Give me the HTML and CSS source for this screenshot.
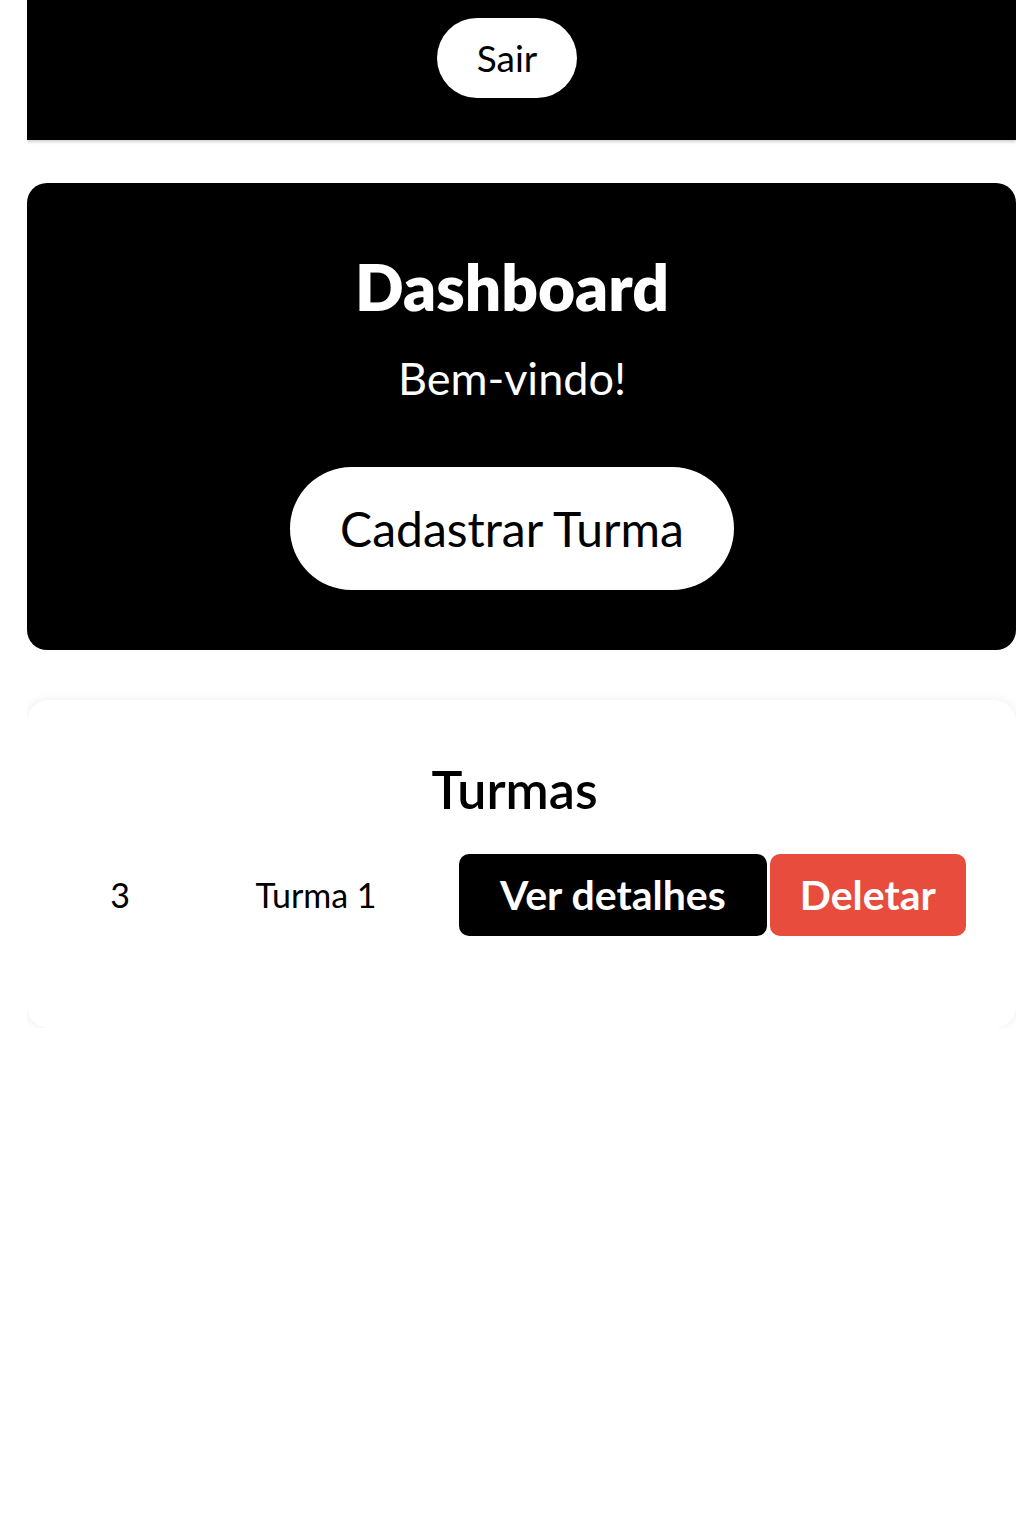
FILE: index.html
```html
<!DOCTYPE html>
<html lang="pt-BR">
<head>
<meta charset="utf-8">
<title>Dashboard</title>
<link rel="stylesheet" href="styles.css">
</head>
<body>
<header class="topbar">
  <button class="btn-sair">Sair</button>
</header>
<main class="content">
  <section class="hero">
    <h1 class="hero-title">Dashboard</h1>
    <p class="hero-sub">Bem-vindo!</p>
    <button class="btn-cadastrar">Cadastrar Turma</button>
  </section>
  <section class="panel">
    <h2 class="panel-title">Turmas</h2>
    <div class="row">
      <span class="cell">3</span>
      <span class="cell">Turma 1</span>
      <div class="actions">
        <button class="btn btn-dark">Ver detalhes</button>
        <button class="btn btn-red">Deletar</button>
      </div>
    </div>
  </section>
</main>
</body>
</html>
```
FILE: styles.css
```css
* { box-sizing: border-box; }
html, body { background: #fff; }
body {
  margin: 0 8px 0 27px;
  font-family: Lato, "Open Sans", sans-serif;
  color: #000;
}
button { font-family: inherit; border: none; cursor: pointer; }

.topbar {
  background: #000;
  height: 140px;
  padding: 18px 29px 0 0;
  display: flex;
  justify-content: center;
  align-items: flex-start;
  box-shadow: 0 2px 3px rgba(0,0,0,0.18);
}
.btn-sair {
  background: #fff;
  color: #000;
  font-size: 37px;
  line-height: 44px;
  padding: 18px 40px;
  border-radius: 40px;
}

.content {
  padding-top: 43px;
  display: flex;
  flex-direction: column;
  gap: 50px;
}

.hero {
  background: #000;
  color: #fff;
  border-radius: 20px;
  height: 467px;
  padding: 65px 19px 0 0;
  display: flex;
  flex-direction: column;
  align-items: center;
}
.hero-title {
  margin: 0;
  font-size: 64px;
  font-weight: 800;
  line-height: 77px;
}
.hero-sub {
  margin: 26px 0 0;
  font-size: 45px;
  line-height: 54px;
}
.btn-cadastrar {
  margin-top: 62px;
  background: #fff;
  color: #000;
  font-size: 48px;
  line-height: 57px;
  padding: 33px 50px;
  border-radius: 62px;
}

.panel {
  background: #fff;
  border-radius: 22px;
  height: 328px;
  padding: 59px 40px 0;
  box-shadow: 0 0 12px rgba(0,0,0,0.07);
}
.panel-title {
  margin: 0;
  text-align: center;
  font-size: 52px;
  font-weight: 600;
  line-height: 60px;
  padding-right: 14px;
}
.row {
  margin-top: 35px;
  display: grid;
  grid-template-columns: 106px 286px auto;
  align-items: center;
}
.cell {
  text-align: center;
  font-size: 34px;
  line-height: 40px;
}
.actions {
  display: flex;
  gap: 3px;
}
.btn {
  color: #fff;
  font-size: 41px;
  font-weight: 700;
  line-height: 48px;
  padding: 17px 41px;
  border-radius: 10px;
}
.btn-dark { background: #000; }
.btn-red { background: #e74c3c; padding: 17px 30px; }
```
